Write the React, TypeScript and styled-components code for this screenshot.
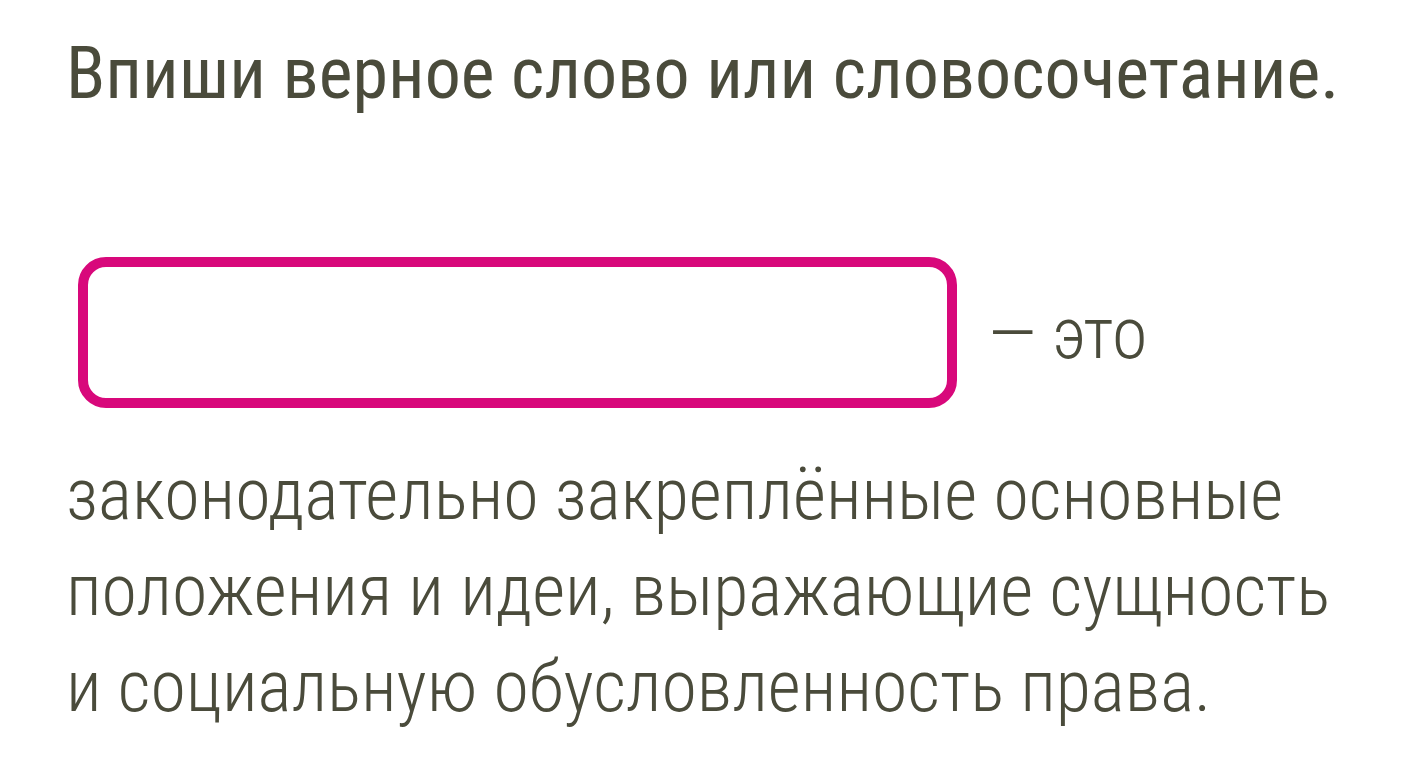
import React from "react";
import styled, { createGlobalStyle } from "styled-components";

const Global = createGlobalStyle`
  html, body { margin: 0; padding: 0; background: #ffffff; }
  body { font-family: "Roboto Condensed", Roboto, "Noto Sans", sans-serif; }
`;

const Page = styled.main`
  padding: 30px 0 0 66px;
  color: #4a4b3b;
  font-stretch: 75%;
`;

const Title = styled.h1`
  margin: 0;
  font-size: 72px;
  line-height: 88px;
  font-weight: 400;
`;

const Row = styled.div`
  display: flex;
  align-items: center;
  gap: 31px;
  margin: 139px 0 0 12px;
`;

const AnswerBox = styled.div`
  box-sizing: border-box;
  width: 879px;
  height: 151px;
  border: 10px solid #d8087b;
  border-radius: 28px;
  background: #fff;
`;

const Tail = styled.span`
  font-size: 72px;
  font-weight: 300;
  line-height: 96px;
  margin-top: 2px;
`;

const Body = styled.p`
  margin: 39px 0 0;
  font-size: 72px;
  line-height: 96px;
  font-weight: 300;
`;

const Line = styled.span`
  display: block;
  white-space: nowrap;
`;

export default function App() {
  return (
    <>
      <Global />
      <Page>
        <Title>Впиши верное слово или словосочетание.</Title>
        <Row>
          <AnswerBox />
          <Tail>— это</Tail>
        </Row>
        <Body>
          <Line>законодательно закреплённые основные</Line>
          <Line>положения и идеи, выражающие сущность</Line>
          <Line>и социальную обусловленность права.</Line>
        </Body>
      </Page>
    </>
  );
}
